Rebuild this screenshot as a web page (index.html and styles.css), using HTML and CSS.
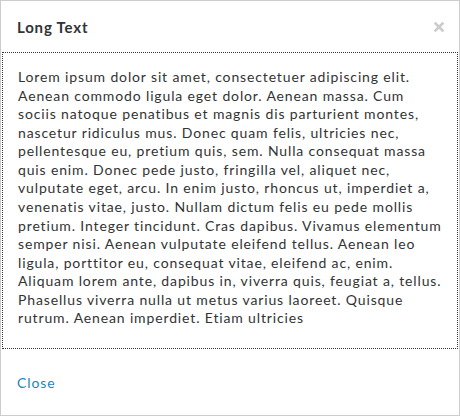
FILE: index.html
```html
<!DOCTYPE html>
<html>
<head>
<meta charset="utf-8">
<link rel="stylesheet" href="styles.css">
</head>
<body>
<div class="modal">
  <div class="modal-header">
    <h4 class="modal-title">Long Text</h4>
    <button class="close" type="button" aria-label="Close">
      <svg width="10" height="10" viewBox="0 0 10 10"><path d="M1.5 1.5 L8.5 8.5 M8.5 1.5 L1.5 8.5" stroke="#cccccc" stroke-width="2.6" stroke-linecap="square"/></svg>
    </button>
  </div>
  <div class="modal-body">
    <p>Lorem ipsum dolor sit amet, consectetuer adipiscing elit. Aenean commodo ligula eget dolor. Aenean massa. Cum sociis natoque penatibus et magnis dis parturient montes, nascetur ridiculus mus. Donec quam felis, ultricies nec, pellentesque eu, pretium quis, sem. Nulla consequat massa quis enim. Donec pede justo, fringilla vel, aliquet nec, vulputate eget, arcu. In enim justo, rhoncus ut, imperdiet a, venenatis vitae, justo. Nullam dictum felis eu pede mollis pretium. Integer tincidunt. Cras dapibus. Vivamus elementum semper nisi. Aenean vulputate eleifend tellus. Aenean leo ligula, porttitor eu, consequat vitae, eleifend ac, enim. Aliquam lorem ante, dapibus in, viverra quis, feugiat a, tellus. Phasellus viverra nulla ut metus varius laoreet. Quisque rutrum. Aenean imperdiet. Etiam ultricies</p>
  </div>
  <div class="modal-footer">
    <a class="link" href="#">Close</a>
  </div>
</div>
</body>
</html>
```

FILE: styles.css
```css
html, body {
  margin: 0;
  padding: 0;
  background: #ffffff;
}
body {
  font-family: Lato, "Open Sans", sans-serif;
  color: #333333;
}
.modal {
  width: 460px;
  height: 416px;
  box-sizing: border-box;
  border: 1px solid #cccccc;
  display: flex;
  flex-direction: column;
  background: #ffffff;
}
.modal-header {
  height: 51px;
  box-sizing: border-box;
  display: flex;
  align-items: center;
  justify-content: space-between;
  padding: 0 16px 0 16px;
}
.modal-title {
  margin: 0;
  font-size: 15px;
  font-weight: 700;
  letter-spacing: 0.8px;
  color: #333333;
}
.close {
  border: 0;
  background: none;
  padding: 0;
  display: flex;
  margin-right: -1px;
}
.modal-body {
  outline: 1px dotted #333333;
  outline-offset: -1px;
  margin: 0 1px;
  padding: 16px 15px 20px 16px;
  height: 297px;
  box-sizing: border-box;
}
.modal-body p {
  margin: 0;
  font-size: 14px;
  letter-spacing: 0.86px;
  line-height: 18.57px;
}
.modal-footer {
  flex: 1;
  display: flex;
  align-items: center;
  padding: 0 16px;
}
.link {
  color: #1a87b8;
  text-decoration: none;
  font-size: 14px;
  letter-spacing: 0.9px;
}
```
